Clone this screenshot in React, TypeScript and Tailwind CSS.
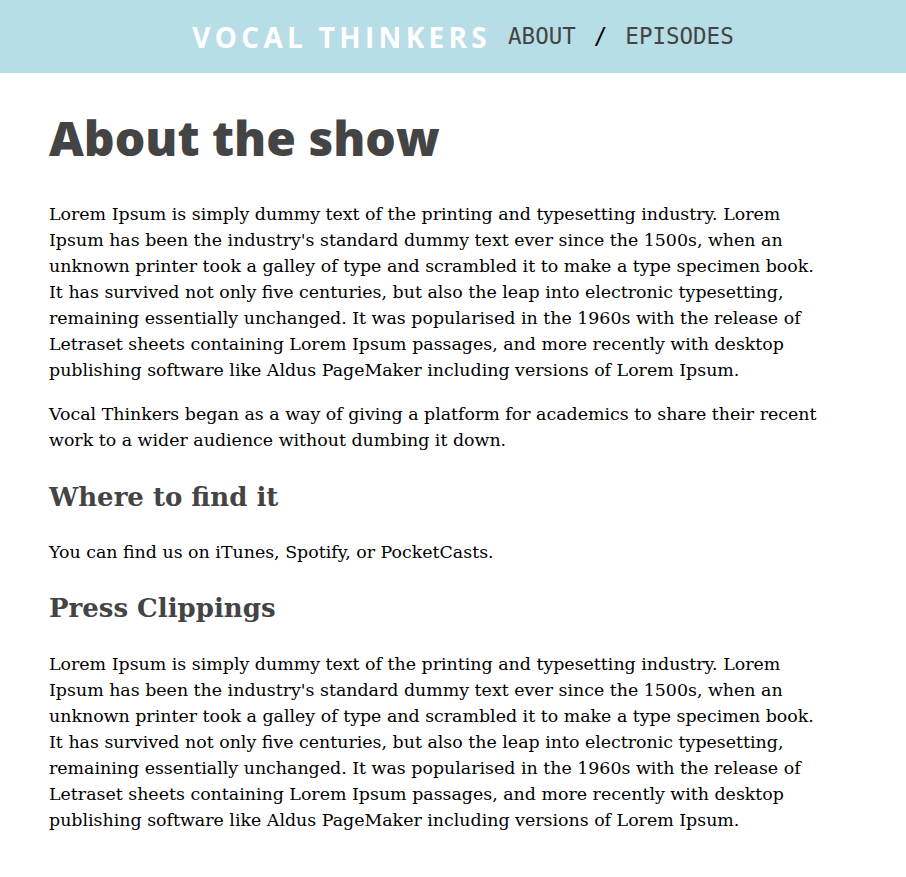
const lorem = [
  "Lorem Ipsum is simply dummy text of the printing and typesetting industry. Lorem",
  "Ipsum has been the industry's standard dummy text ever since the 1500s, when an",
  "unknown printer took a galley of type and scrambled it to make a type specimen book.",
  "It has survived not only five centuries, but also the leap into electronic typesetting,",
  "remaining essentially unchanged. It was popularised in the 1960s with the release of",
  "Letraset sheets containing Lorem Ipsum passages, and more recently with desktop",
  "publishing software like Aldus PageMaker including versions of Lorem Ipsum.",
];

const intro = [
  "Vocal Thinkers began as a way of giving a platform for academics to share their recent",
  "work to a wider audience without dumbing it down.",
];

function Lines({ lines }: { lines: string[] }) {
  return (
    <>
      {lines.map((line, i) => (
        <span key={i}>
          {line}
          {i < lines.length - 1 && <br />}
        </span>
      ))}
    </>
  );
}

export default function App() {
  return (
    <div className="min-h-screen bg-white">
      <header className="h-[73px] bg-[#b7dde6] flex items-center justify-center gap-[17px] pl-[20px]">
        <span className="font-['Open_Sans',sans-serif] font-bold text-[28px] tracking-[4.3px] text-white">
          VOCAL THINKERS
        </span>
        <nav className="flex items-center gap-[18px] font-['DejaVu_Sans_Mono','Liberation_Mono',monospace] text-[22.5px] text-[#444]">
          <a href="#">ABOUT</a>
          <span className="text-black">/</span>
          <a href="#">EPISODES</a>
        </nav>
      </header>

      <main className="px-[49px] pt-[30px] font-['DejaVu_Serif',serif] text-[17.4px] leading-[26px] text-black whitespace-nowrap">
        <h1 className="font-['Open_Sans',sans-serif] font-extrabold text-[48px] leading-[70px] text-[#444] mb-[28px]">
          About the show
        </h1>
        <p className="mb-[18px]">
          <Lines lines={lorem} />
        </p>
        <p>
          <Lines lines={intro} />
        </p>
        <h2 className="font-bold text-[26px] leading-[40px] text-[#444] mt-[24px] mb-[22px]">Where to find it</h2>
        <p>You can find us on iTunes, Spotify, or PocketCasts.</p>
        <h2 className="font-bold text-[26px] leading-[40px] text-[#444] mt-[23px] mb-[23px]">Press Clippings</h2>
        <p>
          <Lines lines={lorem} />
        </p>
      </main>
    </div>
  );
}
